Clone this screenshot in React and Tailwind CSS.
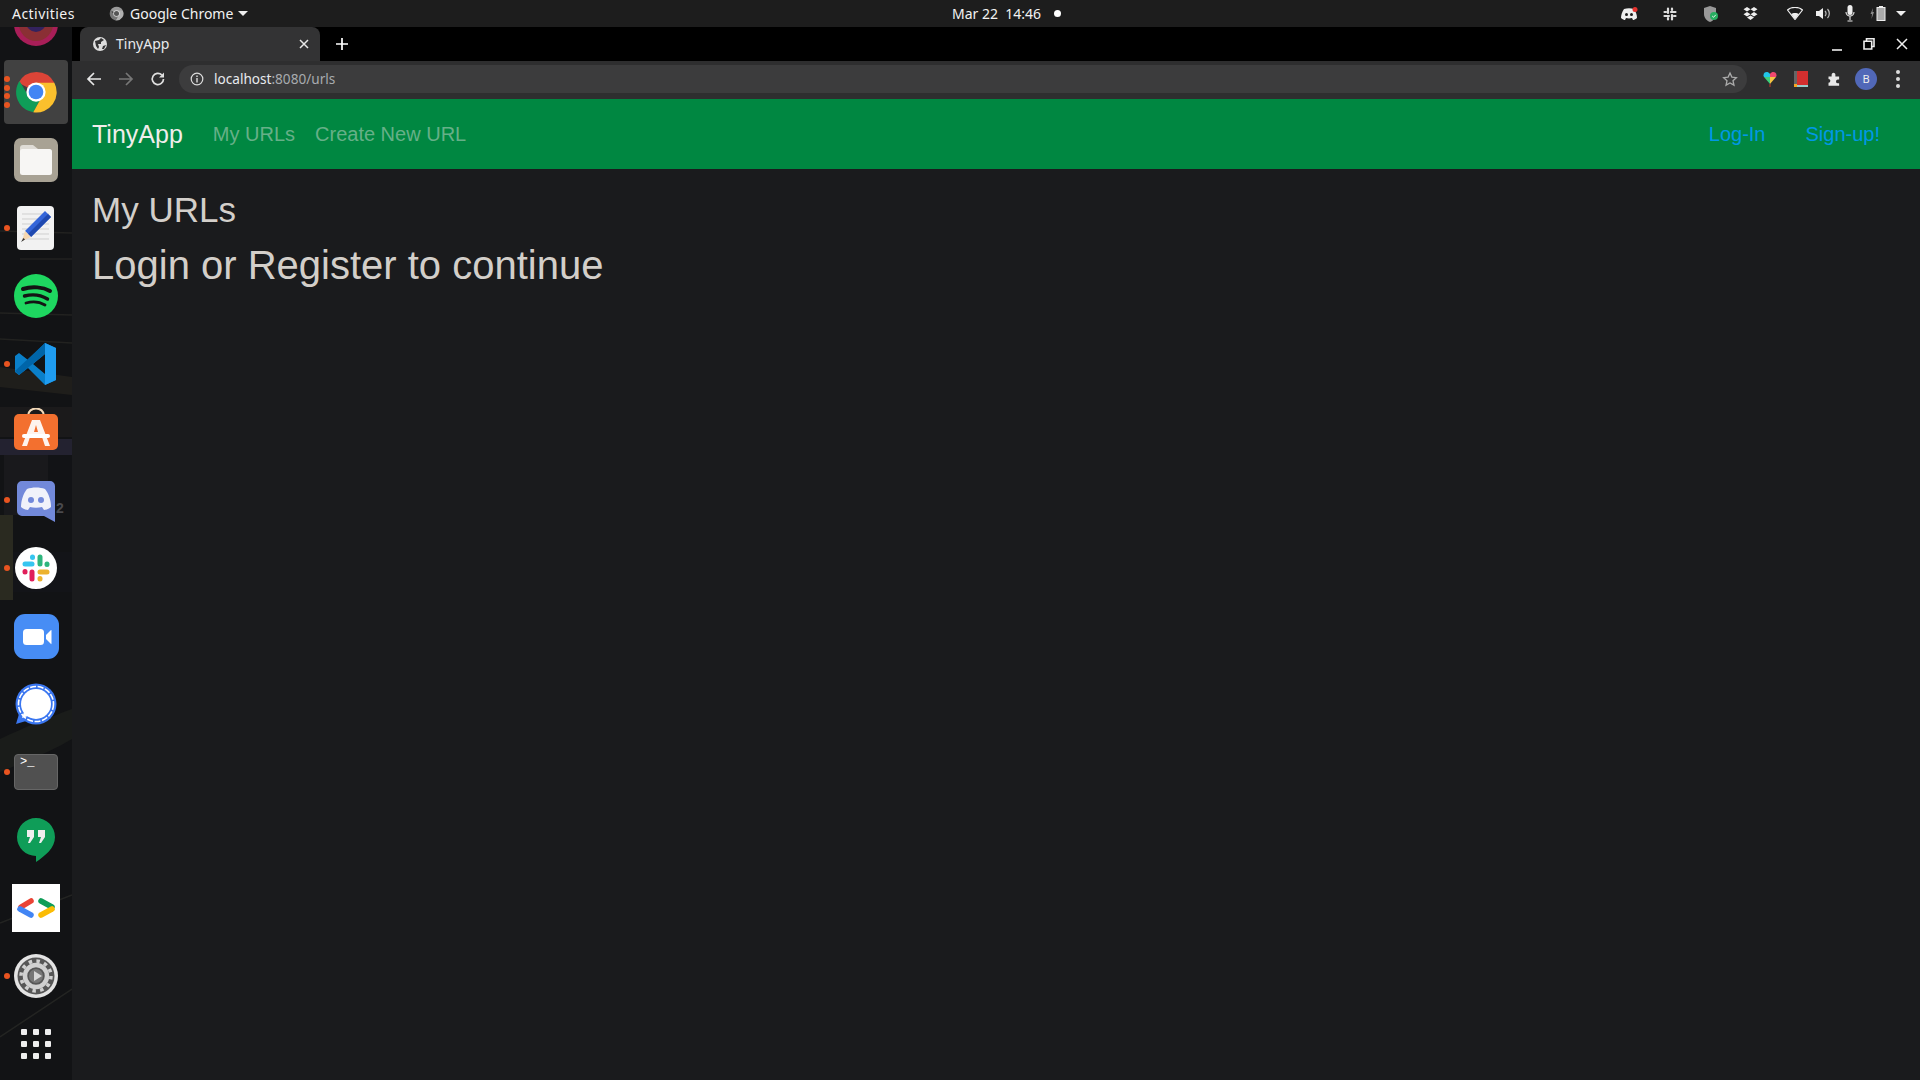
import React from "react";

const Dot = ({ y }) => <span className="absolute left-[4px] w-[6px] h-[6px] rounded-full bg-[#e95420]" style={{ top: y }} />;

function ChromeIcon({ size = 44, grey = false }) {
  const c = grey ? ["#9a9a9a", "#777", "#b0b0b0", "#555", "#ddd"] : ["#db4437", "#0f9d58", "#fbc02d", "#4285f4", "#fff"];
  return (
    <svg width={size} height={size} viewBox="0 0 48 48">
      <path d="M24 24 L5 14 A22 22 0 0 1 44 14 Z" fill={c[0]} />
      <path d="M6 12 A22 22 0 0 0 21 46 L31 28 L24 24 L16 29 Z" fill={c[1]} />
      <path d="M24 14 L44 14 A22 22 0 0 1 21 46 L31 28 Z" fill={c[2]} />
      <circle cx="24" cy="24" r="10.5" fill={c[4]} />
      <circle cx="24" cy="24" r="8" fill={c[3]} />
    </svg>
  );
}

const FilesIcon = () => (
  <svg width="44" height="44" viewBox="0 0 44 44">
    <rect x="0" y="0" width="44" height="44" rx="7" fill="#a8a294" />
    <path d="M6 10 a3 3 0 0 1 3-3 h10 l5 4 v6 h-18 Z" fill="#dfdcd6" />
    <rect x="6" y="11" width="32" height="26" rx="2.5" fill="#f7f6f4" />
  </svg>
);
const EditorIcon = () => (
  <svg width="44" height="44" viewBox="0 0 44 44">
    <rect x="3" y="0" width="37" height="44" rx="4" fill="#f2f2f2" />
    <g stroke="#cfcfcf" strokeWidth="1">
      <path d="M8 8h27M8 13h27M8 18h27M8 23h27M8 28h27M8 33h27" />
    </g>
    <path d="M37 11 L17 31 L11 25 L31 5 Z" fill="#3465d9" />
    <path d="M34 8 L14 28 L17 31 L37 11 Z" fill="#1f49b0" />
    <path d="M11 25 L17 31 L8 35 Z" fill="#f6d7b0" />
    <path d="M9.5 32 L11 33.5 L7 36 Z" fill="#333" />
  </svg>
);
const SpotifyIcon = () => (
  <svg width="44" height="44" viewBox="0 0 44 44">
    <circle cx="22" cy="22" r="22" fill="#1ed760" />
    <g fill="none" stroke="#141414" strokeLinecap="round">
      <path d="M9 15 C18 12 29 13 36 17" strokeWidth="4" />
      <path d="M10.5 22 C18 20 27 21 33.5 25" strokeWidth="3.4" />
      <path d="M12 29 C19 27 26 28 31 31" strokeWidth="2.8" />
    </g>
  </svg>
);
const VSCodeIcon = () => (
  <svg width="44" height="44" viewBox="0 0 44 44">
    <path d="M31 1 L42 6 V38 L31 43 L14 26 L5 33 L1 30 V14 L5 11 L14 18 Z M31 12 L19 22 L31 32 Z" fill="#0a7fc9" />
    <path d="M31 1 L42 6 V38 L31 43 Z" fill="#1f9cf0" />
    <path d="M1 29 L5 33 L31 12 V1 Z" fill="#0065a9" />
  </svg>
);
const StoreIcon = () => (
  <svg width="44" height="44" viewBox="0 0 44 44" className="-mt-[4px]">
    <path d="M14 8 C14 -2 30 -2 30 8" fill="none" stroke="#f2d9b8" strokeWidth="2" />
    <rect x="0" y="6" width="44" height="36" rx="5" fill="#f3702f" />
    <path d="M18 12 h8 l10 26 h-5 l-3-9 h-12 l-3 9 h-5 Z M20 24 h4 l-2-7 Z" fill="#fff" fillOpacity="0.92" />
    <rect x="8" y="26" width="28" height="4" rx="2" fill="#fff" />
  </svg>
);
const DiscordDock = () => (
  <svg width="38" height="41" viewBox="0 0 38 41" className="mt-[3px]">
    <path d="M5 0 H33 a5 5 0 0 1 5 5 V41 L27 35 H5 a5 5 0 0 1 -5 -5 V5 a5 5 0 0 1 5 -5 Z" fill="#7289da" />
    <path d="M10 8 C15 6 23 6 28 8 C32 13 34 20 34 26 C32 28 29 29 27 29 L25 26 C21 27 17 27 13 26 L11 29 C9 29 6 28 4 26 C4 20 6 13 10 8 Z" fill="#f0f2fa" />
    <circle cx="14" cy="19" r="3" fill="#7289da" />
    <circle cx="24" cy="19" r="3" fill="#7289da" />
  </svg>
);
const SlackDock = () => (
  <svg width="42" height="42" viewBox="0 0 42 42">
    <circle cx="21" cy="21" r="21" fill="#fff" />
    <g strokeWidth="5" strokeLinecap="round" fill="none">
      <path d="M10 17 H17" stroke="#36c5f0" />
      <path d="M17.5 10 V10.5" stroke="#36c5f0" />
      <path d="M25 10 V17" stroke="#2eb67d" />
      <path d="M32 17 V17.5" stroke="#2eb67d" />
      <path d="M25 25 H32" stroke="#ecb22e" />
      <path d="M25 32 V31.5" stroke="#ecb22e" />
      <path d="M17 25 V32" stroke="#e01e5a" />
      <path d="M10 25 V24.5" stroke="#e01e5a" />
    </g>
  </svg>
);
const ZoomIcon = () => (
  <svg width="45" height="45" viewBox="0 0 45 45">
    <rect width="45" height="45" rx="11" fill="#478df5" />
    <rect x="9" y="15" width="21" height="16" rx="3.5" fill="#fff" />
    <path d="M32 21 L37 16 Q37.5 15.5 37.5 17 V29 Q37.5 30.5 37 30 L32 25 Z" fill="#fff" />
  </svg>
);
const SignalIcon = () => (
  <svg width="42" height="42" viewBox="0 0 42 42">
    <circle cx="21" cy="21" r="20.5" fill="#3a76f0" />
    <path d="M1 41 L4 31 L11 38 Z" fill="#3a76f0" />
    <circle cx="21" cy="21" r="17.5" fill="none" stroke="#fff" strokeWidth="1.6" strokeDasharray="6 1.6" />
    <circle cx="21" cy="21" r="15" fill="#fff" />
    <path d="M7 35 L9 29 L13 33 Z" fill="#fff" />
  </svg>
);
const TerminalIcon = () => (
  <div className="w-[44px] h-[36px] rounded-[4px] bg-[#505050] border border-[#666] text-white text-[12px] leading-[14px] pl-[5px] font-['Liberation_Mono',monospace]">&gt;_</div>
);
const HangoutsIcon = () => (
  <svg width="38" height="44" viewBox="0 0 38 44">
    <path d="M19 0 A19 19 0 0 1 38 19 C38 30 28 38 19 44 V38 A19 19 0 0 1 19 0 Z" fill="#0f9d58" />
    <path d="M10 12 H17 V19 L13 25 H11 L13 19 H10 Z M21 12 H28 V19 L24 25 H22 L24 19 H21 Z" fill="#eee" />
  </svg>
);
const DevIcon = () => (
  <div className="w-[48px] h-[48px] bg-white flex items-center justify-center">
    <svg width="40" height="20" viewBox="0 0 40 20">
      <g strokeWidth="5.5" strokeLinecap="round" fill="none">
        <path d="M15 3 L5 9" stroke="#ea4335" />
        <path d="M4 11 L15 17" stroke="#4285f4" />
        <path d="M25 3 L36 9" stroke="#0f9d58" />
        <path d="M36 11 L25 17" stroke="#fbbc05" />
      </g>
    </svg>
  </div>
);
const SettingsIcon = () => (
  <svg width="44" height="44" viewBox="0 0 44 44">
    <circle cx="22" cy="22" r="22" fill="#e3e3e3" />
    <circle cx="22" cy="22" r="18.5" fill="#565656" />
    <circle cx="22" cy="22" r="11" fill="none" stroke="#d0d0d0" strokeWidth="4.5" />
    <circle cx="22" cy="22" r="15" fill="none" stroke="#d0d0d0" strokeWidth="3.5" strokeDasharray="3.5 4.35" />
    <circle cx="22" cy="22" r="7" fill="#777" />
    <path d="M20 17 L28 22 L20 27 Z" fill="#d8d8d8" />
  </svg>
);
const GridIcon = () => (
  <div className="grid grid-cols-3 gap-x-[6px] gap-y-[6px]">
    {[0, 1, 2, 3, 4, 5, 6, 7, 8].map((i) => (
      <span key={i} className="w-[6px] h-[6px] rounded-[1px] bg-[#eee]" />
    ))}
  </div>
);
const PartialIcon = () => (
  <svg width="44" height="44" viewBox="0 0 44 44">
    <circle cx="22" cy="22" r="22" fill="#a81e58" />
    <circle cx="22" cy="22" r="17" fill="#8a2f34" />
    <circle cx="22" cy="20" r="10" fill="#33225e" />
  </svg>
);

const dock = [
  { icon: <PartialIcon /> },
  { icon: <ChromeIcon />, active: true, dots: [18, 27, 35, 44] },
  { icon: <FilesIcon /> },
  { icon: <EditorIcon />, dots: [31] },
  { icon: <SpotifyIcon /> },
  { icon: <VSCodeIcon />, dots: [31] },
  { icon: <StoreIcon /> },
  { icon: <DiscordDock />, dots: [31] },
  { icon: <SlackDock />, dots: [31] },
  { icon: <ZoomIcon /> },
  { icon: <SignalIcon /> },
  { icon: <TerminalIcon />, dots: [31] },
  { icon: <HangoutsIcon /> },
  { icon: <DevIcon /> },
  { icon: <SettingsIcon />, dots: [31] },
  { icon: <GridIcon /> },
];

function Wallpaper() {
  return (
    <svg className="absolute inset-0" width="72" height="1053" viewBox="0 0 72 1053">
      <rect width="72" height="1053" fill="#121315" />
      <path d="M0 204 L72 206 M20 232 H72 M0 286 L72 288 M0 312 L72 316" stroke="#222220" strokeWidth="1.5" />
      <path d="M0 340 L72 350 V368 L0 360 Z" fill="#1f1e1b" />
      <rect x="0" y="380" width="72" height="30" fill="#1b1a1b" />
      <rect x="0" y="412" width="72" height="16" fill="#232230" />
      <rect x="4" y="428" width="44" height="60" fill="#19191c" />
      <rect x="48" y="428" width="24" height="60" fill="#121316" />
      <rect x="0" y="488" width="13" height="85" fill="#2a2a20" />
      <rect x="13" y="525" width="59" height="40" fill="#131418" />
      <path d="M0 712 C25 700 50 690 72 682 V712 C50 725 25 735 0 745 Z" fill="#1a1c1a" />
      <path d="M0 896 L72 868 M0 1010 L72 962" stroke="#232422" strokeWidth="1.5" />
    </svg>
  );
}

function TopBar() {
  return (
    <div className="h-[27px] shrink-0 bg-[#1d1d1d] flex items-center text-[#f2f2f2] text-[14px] font-['Noto_Sans',sans-serif] relative z-10">
      <span className="ml-[12px] w-[97px] tracking-[0.45px]">Activities</span>
      <span className="flex items-center gap-[6px] w-[843px]">
        <ChromeIcon size={15} grey />
        <span>Google Chrome</span>
        <span className="ml-[-1px] w-0 h-0 border-x-[5px] border-x-transparent border-t-[5px] border-t-[#eee]" />
      </span>
      <span>Mar 22&nbsp;&nbsp;14:46</span>
      <span className="ml-[13px] w-[7px] h-[7px] rounded-full bg-white" />
      <div className="ml-auto flex items-center h-full mr-[14px]">
        <svg width="18" height="14" viewBox="0 0 18 14" className="mr-[25px]">
          <path d="M4 2 C7 1 11 1 14 2 C16 5 17 8 17 11 C15 12.5 14 13 13 13 L12 11 C10 11.6 8 11.6 6 11 L5 13 C4 13 3 12.5 1 11 C1 8 2 5 4 2 Z" fill="#eee" />
          <circle cx="6.5" cy="7.5" r="1.5" fill="#1d1d1d" /><circle cx="11.5" cy="7.5" r="1.5" fill="#1d1d1d" />
          <circle cx="15" cy="2.5" r="2.5" fill="#e5322d" />
        </svg>
        <svg width="14" height="14" viewBox="0 0 14 14" className="mr-[26px]">
          <g stroke="#ddd" strokeWidth="2.2" strokeLinecap="round"><path d="M5 1.5V6M9 8v4.5M1.5 9H6M8 5h4.5M9 1.5V3M5 11v1.5M11 9h1.5M1.5 5H3" /></g>
        </svg>
        <svg width="16" height="18" viewBox="0 0 16 18" className="mr-[24px]">
          <path d="M1 3 L7 1 L13 3 V9 C13 13 10 16 7 17 C4 16 1 13 1 9 Z" fill="#999" />
          <circle cx="11" cy="11" r="4" fill="#27ae60" />
          <path d="M9.2 11 L10.5 12.3 L12.8 9.8" stroke="#fff" strokeWidth="0.9" fill="none" />
        </svg>
        <svg width="15" height="13" viewBox="0 0 15 13" className="mr-[29px]">
          <path d="M4 0 L7.5 2.3 L4 4.6 L0.5 2.3 Z M11 0 L14.5 2.3 L11 4.6 L7.5 2.3 Z M4 5 L7.5 7.3 L4 9.6 L0.5 7.3 Z M11 5 L14.5 7.3 L11 9.6 L7.5 7.3 Z M4 10.5 L7.5 8.5 L11 10.5 L7.5 13 Z" fill="#eee" />
        </svg>
        <svg width="16" height="13" viewBox="0 0 16 13" className="mr-[13px]">
          <path d="M0.5 3 C4 -0.5 12 -0.5 15.5 3 L8 12.5 Z" fill="none" stroke="#eee" strokeWidth="1.2" />
          <path d="M4 7 C6 5.5 10 5.5 12 7 L8 12 Z" fill="#eee" />
        </svg>
        <svg width="15" height="13" viewBox="0 0 15 13" className="mr-[14px]">
          <path d="M0 4 H3 L7 1 V12 L3 9 H0 Z" fill="#eee" />
          <path d="M9 4 A3.5 3.5 0 0 1 9 9 M11.5 2 A6.5 6.5 0 0 1 11.5 11" fill="none" stroke="#bbb" strokeWidth="1.2" />
        </svg>
        <svg width="10" height="17" viewBox="0 0 10 17" className="mr-[15px]">
          <rect x="2.5" y="0" width="5" height="10" rx="2.5" fill="#eee" />
          <path d="M1 7 A4 4 0 0 0 9 7 M5 11 V15 M2.5 16 H7.5" fill="none" stroke="#eee" strokeWidth="1.1" />
        </svg>
        <svg width="17" height="15" viewBox="0 0 17 15" className="mr-[9px]">
          <path d="M3 2 L0.5 8 H2 L1.5 13 L4 6 H2.5 Z" fill="#888" />
          <rect x="7" y="1.5" width="8" height="13" fill="#aaa" stroke="#eee" />
          <rect x="9" y="0" width="4" height="1.5" fill="#eee" />
        </svg>
        <span className="w-0 h-0 border-x-[5px] border-x-transparent border-t-[5px] border-t-[#eee]" />
      </div>
    </div>
  );
}

function ChromeBar() {
  return (
    <>
      <div className="h-[34px] bg-black flex items-end pl-[8px] text-white font-['Noto_Sans',sans-serif]">
        <div className="w-[240px] h-[34px] bg-[#333334] rounded-t-[8px] flex items-center pl-[13px] pr-[11px] gap-[9px]">
          <svg width="14" height="14" viewBox="0 0 14 14">
            <circle cx="7" cy="7" r="7" fill="#ddd" />
            <path d="M2 4 L6 3 L8 1 L11 3 L8 5 L8 7 L5 7 L6 10 L5 12 L3 9 Z M10 9 L13 8 L11 12 L9 12 Z" fill="#333334" />
          </svg>
          <span className="text-[14px] text-[#e8eaed] -mt-[2px]">TinyApp</span>
          <svg className="ml-auto" width="10" height="10" viewBox="0 0 10 10"><path d="M1 1 L9 9 M9 1 L1 9" stroke="#e8e8e8" strokeWidth="1.5" /></svg>
        </div>
        <svg className="ml-[16px] mb-[11px]" width="12" height="12" viewBox="0 0 12 12"><path d="M6 0 V12 M0 6 H12" stroke="#fff" strokeWidth="1.7" /></svg>
        <div className="ml-auto flex items-center h-full text-white mr-[12px]">
          <svg width="12" height="12" viewBox="0 0 12 12" className="mr-[20px] mt-[4px]"><path d="M1 10 H11" stroke="#eee" strokeWidth="1.6" /></svg>
          <svg width="12" height="12" viewBox="0 0 12 12" className="mr-[21px]"><path d="M3.5 2.5 V0.8 H11 V8.5 H9 M1 3.2 H8.7 V11 H1 Z" fill="none" stroke="#eee" strokeWidth="1.6" /></svg>
          <svg width="12" height="12" viewBox="0 0 12 12"><path d="M1 1 L11 11 M11 1 L1 11" stroke="#eee" strokeWidth="1.5" /></svg>
        </div>
      </div>
      <div className="h-[38px] pb-[2px] bg-[#2e2e2f] flex items-center font-['Noto_Sans',sans-serif]">
        <svg width="16" height="16" viewBox="0 0 16 16" className="ml-[14px]"><path d="M15 8 H2 M8 2 L2 8 L8 14" fill="none" stroke="#e8e8e8" strokeWidth="1.7" /></svg>
        <svg width="16" height="16" viewBox="0 0 16 16" className="ml-[16px]"><path d="M1 8 H14 M8 2 L14 8 L8 14" fill="none" stroke="#777" strokeWidth="1.7" /></svg>
        <svg width="16" height="16" viewBox="0 0 16 16" className="ml-[16px]"><path d="M13.5 8 A5.6 5.6 0 1 1 11.8 3.9" fill="none" stroke="#e0e0e0" strokeWidth="1.7" /><path d="M14 1.5 V6.5 H9 Z" fill="#e0e0e0" /></svg>
        <div className="ml-[13px] w-[1568px] h-[28px] rounded-full bg-[#3c3c3d] flex items-center pl-[11px] pr-[8px]">
          <svg width="14" height="14" viewBox="0 0 14 14"><circle cx="7" cy="7" r="5.8" fill="none" stroke="#ddd" strokeWidth="1.2" /><path d="M7 6 V10.5 M7 3.4 V4.9" stroke="#ddd" strokeWidth="1.4" /></svg>
          <span className="ml-[10px] text-[13.6px] text-[#e8eaed]">localhost<span className="text-[#a8abaf]">:8080/urls</span></span>
          <svg className="ml-auto mr-[1px]" width="16" height="16" viewBox="0 0 24 24"><path d="M12 3 L14.8 9.2 L21.5 10 L16.5 14.6 L17.9 21.3 L12 17.9 L6.1 21.3 L7.5 14.6 L2.5 10 L9.2 9.2 Z" fill="none" stroke="#aaa" strokeWidth="2" /></svg>
        </div>
        <svg width="14" height="16" viewBox="0 0 14 16" className="ml-[16px]">
          <path d="M7 13 L1 6 L7 6 Z" fill="#3fd07a" />
          <path d="M7 13 L13 6 L7 6 Z" fill="#f5c542" />
          <path d="M1 6 C-1 2 4 -1 7 3 L7 6 Z" fill="#21c5e8" />
          <path d="M7 3 C10 -1 15 2 13 6 L7 6 Z" fill="#f0486f" />
          <path d="M7 13 V16" stroke="#c0392b" />
        </svg>
        <svg width="14" height="16" viewBox="0 0 14 16" className="ml-[17px]">
          <rect width="14" height="14" fill="#d32f2f" /><rect width="3" height="14" fill="#666" /><path d="M0 14 H14 V16 H0 Z" fill="#9cc" /><rect y="13" width="3" height="3" fill="#f5a623" />
        </svg>
        <svg width="15" height="15" viewBox="0 0 24 24" className="ml-[18px]"><path d="M10 2 a3 3 0 0 1 5 2 V7 H21 V12 H19 a3 3 0 0 0 0 6 H21 V22 H4 V17 a3 3 0 0 0 0-6 V7 H9 V4 Z" fill="#e8e8e8" /></svg>
        <span className="ml-[14px] w-[22px] h-[22px] rounded-full bg-[#5168b8] text-[#eee] text-[11px] flex items-center justify-center">B</span>
        <span className="ml-[19px] flex flex-col gap-[3.5px]">
          <span className="w-[3.5px] h-[3.5px] rounded-full bg-[#ddd]" />
          <span className="w-[3.5px] h-[3.5px] rounded-full bg-[#ddd]" />
          <span className="w-[3.5px] h-[3.5px] rounded-full bg-[#ddd]" />
        </span>
      </div>
    </>
  );
}

export default function App() {
  return (
    <div className="w-[1920px] h-[1080px] overflow-hidden flex flex-col bg-[#1a1b1d]">
      <TopBar />
      <div className="flex flex-1 min-h-0">
        <aside className="w-[72px] shrink-0 relative overflow-hidden">
          <Wallpaper />
          <span className="absolute left-[56px] top-[473px] text-[14px] leading-[16px] font-bold text-[#4a4a4e] font-['Liberation_Sans',sans-serif]">2</span>
          <div className="relative mt-[-37px]">
            {dock.map((d, i) => (
              <div key={i} className="relative h-[68px] flex items-center justify-center">
                {d.active && <span className="absolute left-[4px] top-[2px] w-[64px] h-[64px] rounded-[4px] bg-[#414141]" />}
                <span className="relative flex">{d.icon}</span>
                {(d.dots || []).map((y) => <Dot key={y} y={y} />)}
              </div>
            ))}
          </div>
        </aside>
        <main className="flex-1 min-w-0 flex flex-col font-['Liberation_Sans',Arial,sans-serif]">
          <ChromeBar />
          <nav className="h-[70px] shrink-0 bg-[#008741] flex items-center pl-[20px] pr-[40px]">
            <span className="text-[25px] text-[#f0eeeb] mt-[1px]">TinyApp</span>
            <span className="ml-[30px] text-[20px] text-[#66b088]">My URLs</span>
            <span className="ml-[20px] text-[20px] text-[#66b088]">Create New URL</span>
            <span className="ml-auto text-[20px] text-[#0098e6]">Log-In</span>
            <span className="ml-[40px] text-[20px] text-[#0098e6]">Sign-up!</span>
          </nav>
          <div className="pl-[20px] text-[#d3cfca]">
            <h3 className="text-[35px] leading-[42px] mt-[20px]">My URLs</h3>
            <h2 className="text-[40px] leading-[48px] mt-[10px]">Login or Register to continue</h2>
          </div>
        </main>
      </div>
    </div>
  );
}
